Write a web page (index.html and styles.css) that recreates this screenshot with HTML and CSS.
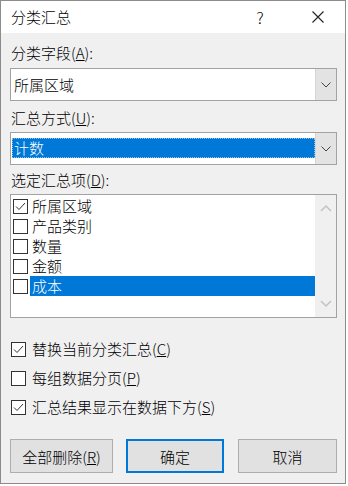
FILE: index.html
```html
<!DOCTYPE html>
<html>
<head>
    <meta charset="UTF-8">
    <title>分类汇总</title>
    <link rel="stylesheet" href="styles.css">
</head>
<body>
    <div class="dialog">
        <div class="titlebar">
            <span class="title">分类汇总</span>
            <span class="help">?</span>
            <span class="close">
                <svg width="12" height="12" viewBox="0 0 12 12"><path d="M0.5 0.5L11.5 11.5M11.5 0.5L0.5 11.5" stroke="#222" stroke-width="1.1" fill="none"/></svg>
            </span>
        </div>
        <div class="content">
            <div class="label first">分类字段(<u>A</u>):</div>
            <div class="combo">
                <div class="value">所属区域</div>
                <div class="drop">
                    <svg width="10" height="6" viewBox="0 0 10 6"><path d="M0.5 0.5L5 5L9.5 0.5" stroke="#444" fill="none"/></svg>
                </div>
            </div>

            <div class="label second">汇总方式(<u>U</u>):</div>
            <div class="combo">
                <div class="value selected"><span>计数</span></div>
                <div class="drop">
                    <svg width="10" height="6" viewBox="0 0 10 6"><path d="M0.5 0.5L5 5L9.5 0.5" stroke="#444" fill="none"/></svg>
                </div>
            </div>

            <div class="label third">选定汇总项(<u>D</u>):</div>
            <div class="listbox">
                <div class="rows">
                    <div class="row">
                        <span class="box">
                            <svg width="13" height="13" viewBox="0 0 13 13"><path d="M2 6.5L5 9.5L11 3" stroke="#333" fill="none"/></svg>
                        </span>
                        <span class="item">所属区域</span>
                    </div>
                    <div class="row"><span class="box"></span><span class="item">产品类别</span></div>
                    <div class="row"><span class="box"></span><span class="item">数量</span></div>
                    <div class="row"><span class="box"></span><span class="item">金额</span></div>
                    <div class="row"><span class="box"></span><span class="item active">成本</span></div>
                </div>
                <div class="scrollbar">
                    <svg width="12" height="8" viewBox="0 0 12 8"><path d="M1 7L6 2L11 7" stroke="#c2c2c2" stroke-width="1.5" fill="none"/></svg>
                    <svg width="12" height="8" viewBox="0 0 12 8"><path d="M1 1L6 6L11 1" stroke="#c2c2c2" stroke-width="1.5" fill="none"/></svg>
                </div>
            </div>

            <div class="option opt1">
                <span class="box">
                    <svg width="13" height="13" viewBox="0 0 13 13"><path d="M2 6.5L5 9.5L11 3" stroke="#333" fill="none"/></svg>
                </span>
                替换当前分类汇总(<u>C</u>)
            </div>
            <div class="option">
                <span class="box"></span>
                每组数据分页(<u>P</u>)
            </div>
            <div class="option">
                <span class="box">
                    <svg width="13" height="13" viewBox="0 0 13 13"><path d="M2 6.5L5 9.5L11 3" stroke="#333" fill="none"/></svg>
                </span>
                汇总结果显示在数据下方(<u>S</u>)
            </div>

            <div class="buttons">
                <button class="btn remove">全部删除(<u>R</u>)</button>
                <button class="btn ok">确定</button>
                <button class="btn cancel">取消</button>
            </div>
        </div>
    </div>
</body>
</html>
```

FILE: styles.css
```css
body {
    margin: 0;
    background: #ffffff;
    font-family: "Noto Sans CJK SC", "Noto Sans", sans-serif;
    font-size: 15px;
    font-weight: 300;
    color: #000;
}

.dialog {
    width: 346px;
    height: 484px;
    box-sizing: border-box;
    border: 1px solid #8c8c8c;
    background: #f0f0f0;
}

.titlebar {
    height: 32px;
    background: #ffffff;
    display: flex;
    align-items: center;
    padding-left: 10px;
}

.title {
    flex: 1;
    line-height: 20px;
}

.help {
    width: 20px;
    text-align: center;
    font-size: 16px;
    margin-right: 42px;
}

.close {
    width: 12px;
    height: 12px;
    margin-right: 21px;
    display: flex;
}

.content {
    padding: 10px 8px 0 9px;
}

.label {
    line-height: 20px;
    padding-left: 1px;
}

.label.second {
    margin-top: 7px;
}

.label.third {
    margin-top: 5px;
}

.combo {
    margin-top: 5px;
    height: 33px;
    box-sizing: border-box;
    border: 1px solid #a2a2a2;
    background: #ffffff;
    display: flex;
}

.label.second + .combo {
    margin-top: 4px;
}

.combo .value {
    flex: 1;
    display: flex;
    align-items: center;
    padding-left: 3px;
}

.combo .value.selected {
    padding: 4px 0 5px 1px;
}

.combo .value.selected span {
    flex: 1;
    height: 20px;
    line-height: 20px;
    background: #0078d7;
    color: #ffffff;
    padding-left: 2px;
    outline: 1px dotted #8fc0ea;
    outline-offset: -1px;
}

.combo .drop {
    width: 20px;
    background: #e3e3e3;
    border-left: 1px solid #d6d6d6;
    display: flex;
    align-items: center;
    justify-content: center;
}

.listbox {
    margin-top: 4px;
    height: 124px;
    box-sizing: border-box;
    border: 1px solid #a2a2a2;
    background: #ffffff;
    display: flex;
}

.rows {
    flex: 1;
    padding-top: 1px;
}

.row {
    height: 20px;
    display: flex;
    align-items: center;
}

.box {
    width: 15px;
    height: 15px;
    box-sizing: border-box;
    border: 1px solid #333333;
    background: #ffffff;
    display: flex;
    align-items: center;
    justify-content: center;
    flex-shrink: 0;
}

.row .box {
    margin-left: 2px;
    margin-right: 2px;
}

.item {
    flex: 1;
    line-height: 20px;
    padding-left: 2px;
}

.item.active {
    background: #0078d7;
    color: #ffffff;
}

.scrollbar {
    width: 21px;
    background: #f0f0f0;
    display: flex;
    flex-direction: column;
    align-items: center;
    justify-content: space-between;
    padding: 9px 0 9px;
}

.option {
    display: flex;
    align-items: center;
    line-height: 20px;
    margin-top: 9px;
    padding-left: 1px;
}

.option.opt1 {
    margin-top: 21px;
}

.option .box {
    margin-right: 6px;
}

.buttons {
    margin-top: 22px;
    display: flex;
    gap: 13px;
}

.btn {
    height: 34px;
    font-family: inherit;
    font-size: 15px;
    font-weight: 300;
    color: #000;
    background: #e1e1e1;
    border: 1px solid #adadad;
    padding: 0;
}

.btn.remove {
    width: 103px;
}

.btn.ok {
    width: 98px;
    border: 2px solid #0078d7;
}

.btn.cancel {
    width: 99px;
    margin-left: 1px;
}
```
